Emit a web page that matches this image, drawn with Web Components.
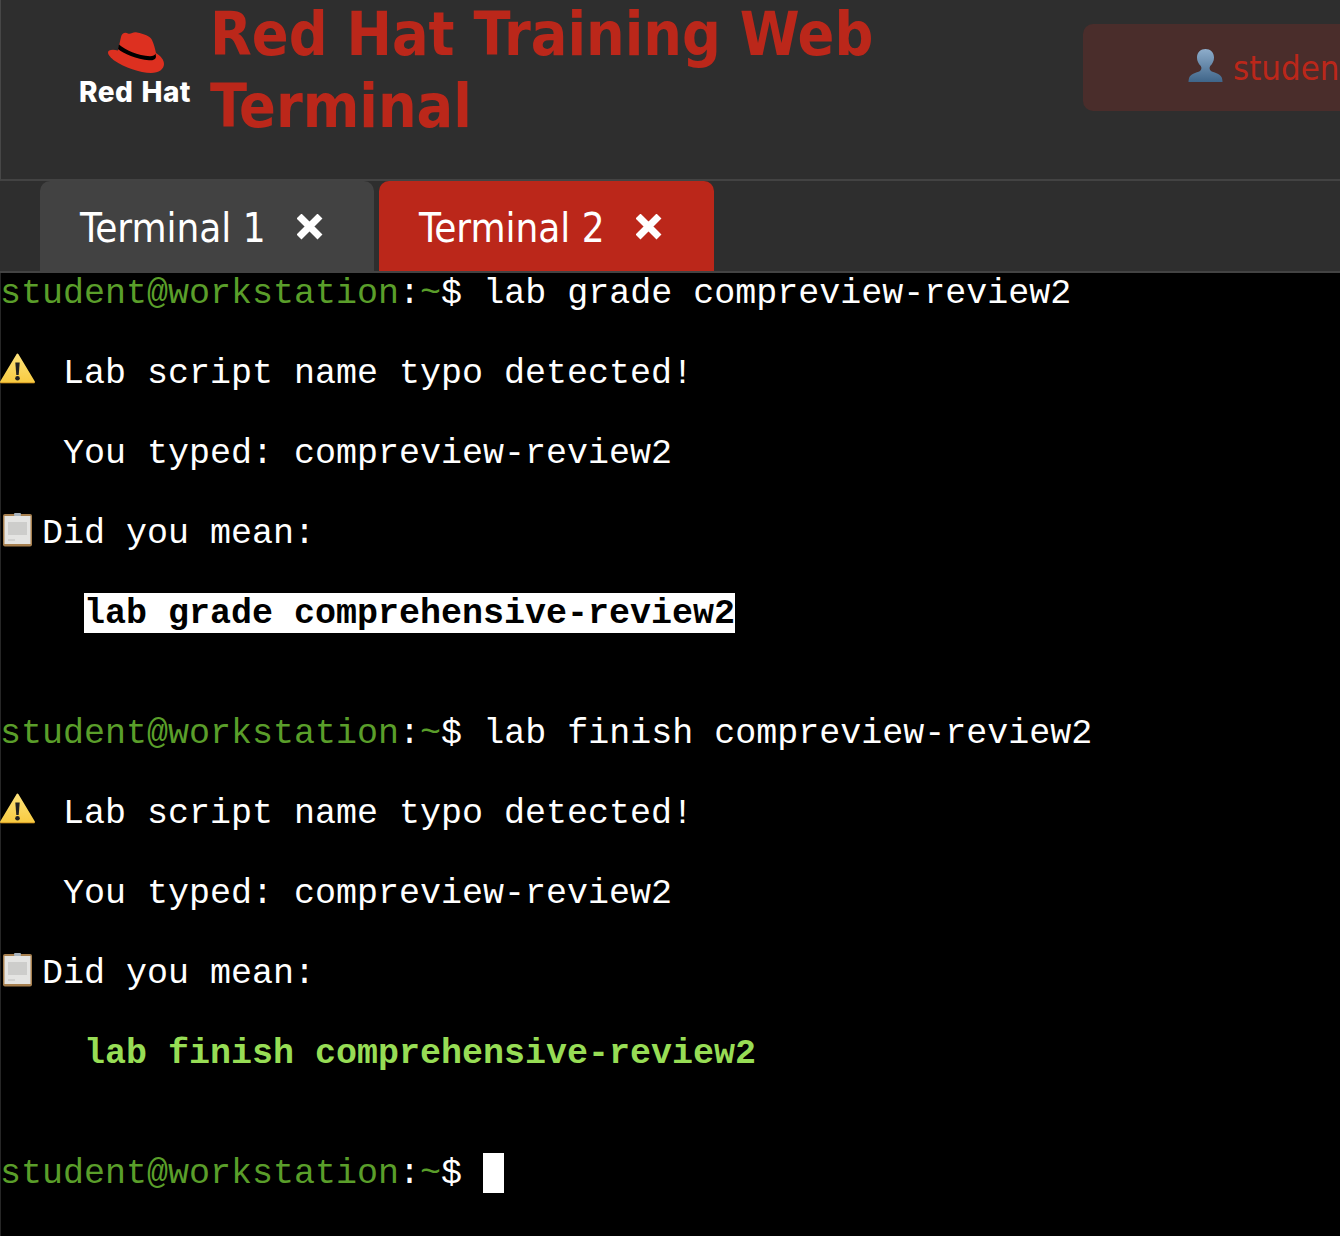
<!DOCTYPE html>
<html>
<head>
<meta charset="utf-8">
<title>Red Hat Training Web Terminal</title>
<style>
  html, body { margin: 0; padding: 0; background: #000; overflow: hidden; }
  body { width: 1340px; height: 1236px; }
</style>
</head>
<body>
<rh-header>
  <rh-logo slot="logo"></rh-logo>
  Red Hat Training Web Terminal
  <user-badge slot="user">student</user-badge>
</rh-header>
<tab-bar>
  <term-tab>Terminal 1</term-tab>
  <term-tab active>Terminal 2</term-tab>
</tab-bar>
<term-screen>
  <term-line prompt>lab grade compreview-review2</term-line>
  <term-line></term-line>
  <term-line><term-icon name="warning"></term-icon> Lab script name typo detected!</term-line>
  <term-line></term-line>
  <term-line>   You typed: compreview-review2</term-line>
  <term-line></term-line>
  <term-line><term-icon name="clipboard"></term-icon>Did you mean:</term-line>
  <term-line></term-line>
  <term-line>    <term-mark>lab grade comprehensive-review2</term-mark></term-line>
  <term-line></term-line>
  <term-line></term-line>
  <term-line prompt>lab finish compreview-review2</term-line>
  <term-line></term-line>
  <term-line><term-icon name="warning"></term-icon> Lab script name typo detected!</term-line>
  <term-line></term-line>
  <term-line>   You typed: compreview-review2</term-line>
  <term-line></term-line>
  <term-line><term-icon name="clipboard"></term-icon>Did you mean:</term-line>
  <term-line></term-line>
  <term-line>    <term-mark green>lab finish comprehensive-review2</term-mark></term-line>
  <term-line></term-line>
  <term-line></term-line>
  <term-line prompt cursor></term-line>
</term-screen>

<script>
(function() {

  function shadow(el, html) {
    el.attachShadow({ mode: 'open' });
    // no stray whitespace: term lines are white-space: pre
    el.shadowRoot.innerHTML = html.trim();
  }

  class RhHeader extends HTMLElement {
    constructor() {
      super();
      shadow(this, `
        <style>
          :host {
            display: flex;
            box-sizing: border-box;
            height: 181px;
            width: 1340px;
            overflow: hidden;
            background: #2e2e2e;
            border-left: 1px solid #474747;
            border-bottom: 2px solid #434343;
          }
          .logo { width: 209px; flex: none; }
          h1 {
            flex: none;
            width: 700px;
            margin: -2px 0 0;
            font: bold 60.4px/72px "DejaVu Sans", sans-serif;
            font-stretch: condensed;
            color: #bb271a;
          }
          .user { margin: 24px 0 0 173px; flex: none; }
        </style>
        <div class="logo"><slot name="logo"></slot></div>
        <h1><slot></slot></h1>
        <div class="user"><slot name="user"></slot></div>
      `);
    }
  }

  class RhLogo extends HTMLElement {
    constructor() {
      super();
      shadow(this, `
        <style>
          :host { display: block; padding: 31px 0 0 78px; }
          svg { display: block; margin-left: 29px; }
          div {
            font: 800 28px/32px Inter, sans-serif;
            letter-spacing: 0.5px;
            color: #fff;
            white-space: nowrap;
            margin-top: 2px;
          }
          span { margin-left: 8px; }
        </style>
        <svg width="57" height="43" viewBox="0 0 57 43">
          <path fill="#dd3020" d="M13 6C14 2 17 1 20 2.500C23 3.500 25 .5 29 1.500C36 3 42 5 44 9C46 13 47 18 48 22C53 25 56 29 56 33C56 38 51 42 43 42C32 42 16 36 7 30C3 27 0 24 0 21.500C0 19 4 18 10 19.500C11 15 12 10 13 6Z"/>
          <path fill="#000" d="M11 13.500C17 19 30 25 42 25.200C45 25.200 47 24.500 47.500 22.500L48 26C47.500 28.500 45 29.500 41 29.300C29 28.500 15 22.500 10 18Z"/>
        </svg>
        <div>Red<span>Hat</span></div>
      `);
    }
  }

  class UserBadge extends HTMLElement {
    constructor() {
      super();
      shadow(this, `
        <style>
          :host {
            display: flex;
            align-items: center;
            box-sizing: border-box;
            width: 400px;
            height: 87px;
            padding-left: 105px;
            background: #4a2d2b;
            border-radius: 10px;
            font: 34.500px "DejaVu Sans", sans-serif;
            font-stretch: condensed;
            color: #bb271a;
          }
          svg { flex: none; margin: 0 10px 4px 0; }
        </style>
        <svg width="35" height="35" viewBox="0 0 37 37">
          <defs>
            <linearGradient id="bust" x1="0" y1="0" x2="0" y2="1">
              <stop offset="0" stop-color="#8eadcb"/>
              <stop offset="1" stop-color="#3f6589"/>
            </linearGradient>
          </defs>
          <path fill="url(#bust)" d="M18.500 1C13.500 1 9.500 4.500 9.500 10C9.500 13.500 11 16.500 13.500 19C14.500 20.500 14.500 22.500 13 24C10.500 26 3 26.500 1.200 31.500C.8 33 .5 34.500 .5 36H36.500C36.500 34.500 36.200 33 35.800 31.500C34 26.500 26.500 26 24 24C22.500 22.500 22.500 20.500 23.500 19C26 16.500 27.500 13.500 27.500 10C27.500 4.500 23.500 1 18.500 1Z"/>
        </svg>
        <slot></slot>
      `);
    }
  }

  class TabBar extends HTMLElement {
    constructor() {
      super();
      shadow(this, `
        <style>
          :host {
            display: flex;
            align-items: flex-end;
            gap: 5px;
            box-sizing: border-box;
            height: 92px;
            padding-left: 40px;
            background: #2e2e2e;
            border-bottom: 2px solid #434343;
          }
        </style>
        <slot></slot>
      `);
    }
  }

  class TermTab extends HTMLElement {
    constructor() {
      super();
      shadow(this, `
        <style>
          :host {
            display: flex;
            align-items: center;
            box-sizing: border-box;
            width: 334px;
            height: 90px;
            padding: 3px 0 0 40px;
            background: #424242;
            border-radius: 10px 10px 0 0;
            font: 40px "DejaVu Sans", sans-serif;
            font-stretch: condensed;
            color: #fff;
            white-space: nowrap;
          }
          :host([active]) { background: #bb271a; width: 335px; }
          .label { width: 217px; }
          svg { flex: none; margin-top: -2px; }
        </style>
        <span class="label"><slot></slot></span>
        <svg width="26" height="26" viewBox="0 0 26 26">
          <path fill="none" stroke="#fff" stroke-width="7" stroke-linecap="square" d="M4.500 4.500L20.500 20.500M20.500 4.500L4.500 20.500"/>
        </svg>
      `);
    }
  }

  class TermScreen extends HTMLElement {
    constructor() {
      super();
      shadow(this, `
        <style>
          :host {
            display: block;
            height: 963px;
            background: #000;
            box-shadow: inset 1px 0 #262626;
            color: #fff;
            font: 35px/42px "Liberation Mono", monospace;
            overflow: hidden;
          }
        </style>
        <slot></slot>
      `);
    }
  }

  class TermLine extends HTMLElement {
    constructor() {
      super();
      let before = '';
      if (this.hasAttribute('prompt')) {
        before = '<span class="g">student@workstation</span>:<span class="g">~</span>$ ';
      }
      let after = this.hasAttribute('cursor') ? '<span class="cur"></span>' : '';
      shadow(this, `
        <style>
          :host { display: block; height: 40px; white-space: pre; }
          .g { color: #5a9e2a; }
          .cur {
            display: inline-block;
            width: 21px;
            height: 40px;
            background: #fff;
            vertical-align: top;
          }
        </style>${before}<slot></slot>${after}`);
    }
  }

  class TermMark extends HTMLElement {
    constructor() {
      super();
      shadow(this, `
        <style>
          :host {
            display: inline-block;
            height: 40px;
            font-weight: bold;
            background: #fff;
            color: #000;
          }
          :host([green]) { background: none; color: #97dd55; }
        </style><slot></slot>
      `);
    }
  }

  const ICONS = {
    warning: `<svg width="36" height="31" viewBox="0 0 36 31">
        <defs>
          <linearGradient id="w" x1="0" y1="0" x2="0" y2="1">
            <stop offset="0" stop-color="#fce27a"/>
            <stop offset="1" stop-color="#f8cb42"/>
          </linearGradient>
        </defs>
        <path fill="url(#w)" stroke="url(#w)" stroke-width="2" stroke-linejoin="round" d="M17.500 1.500L34 29H1Z"/>
        <path fill="none" stroke="#d99a24" stroke-width="1" stroke-linecap="round" d="M1 29.800H34"/>
        <path fill="#222" d="M15.300 9.500H19.700L18.700 22H16.300Z"/>
        <circle fill="#222" cx="17.500" cy="25.300" r="2.300"/>
      </svg>`,
    clipboard: `<svg width="33" height="34" viewBox="0 0 33 34">
        <rect x="3" y="1" width="29" height="32.500" rx="2" fill="#a67f4e"/>
        <rect x="4.500" y="3" width="26" height="28" fill="#e4e4e2"/>
        <rect x="8" y="9" width="19" height="13" fill="#cdcdcb"/>
        <rect x="8" y="26" width="7" height="2" fill="#d2d2d0"/>
        <rect x="14" y="0" width="7" height="3" rx="1" fill="#a9b4bf"/>
      </svg>`
  };

  class TermIcon extends HTMLElement {
    constructor() {
      super();
      shadow(this, `
        <style>
          :host {
            display: inline-block;
            width: 42px;
            height: 40px;
            vertical-align: top;
          }
          svg { display: block; }
        </style>${ICONS[this.getAttribute('name')] || ''}
      `);
    }
  }

  window.customElements.define('rh-header', RhHeader);
  window.customElements.define('rh-logo', RhLogo);
  window.customElements.define('user-badge', UserBadge);
  window.customElements.define('tab-bar', TabBar);
  window.customElements.define('term-tab', TermTab);
  window.customElements.define('term-screen', TermScreen);
  window.customElements.define('term-line', TermLine);
  window.customElements.define('term-mark', TermMark);
  window.customElements.define('term-icon', TermIcon);
})();
</script>
</body>
</html>
